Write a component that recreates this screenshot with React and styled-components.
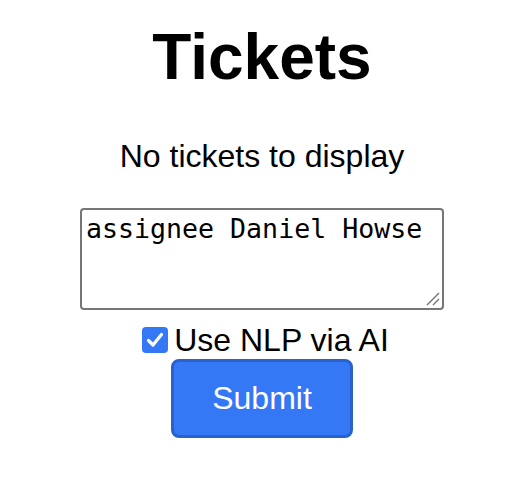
import React, { useState } from 'react';
import styled, { createGlobalStyle } from 'styled-components';

const GlobalStyle = createGlobalStyle`
  html, body {
    margin: 0;
    padding: 0;
    background: #ffffff;
  }
  body {
    font-family: "Liberation Sans", Arial, sans-serif;
    color: #000000;
  }
`;

const Page = styled.div`
  display: flex;
  flex-direction: column;
  align-items: center;
  padding: 20px 0 0 12px;
`;

const Title = styled.h1`
  margin: 0;
  font-size: 64px;
  font-weight: 700;
  line-height: 74px;
`;

const Message = styled.p`
  margin: 44px 0 0;
  font-size: 32px;
  line-height: 37px;
`;

const Form = styled.form`
  display: flex;
  flex-direction: column;
  align-items: center;
  margin-top: 33px;
`;

const BoxWrap = styled.div`
  position: relative;
  width: 364px;
  height: 102px;
`;

const QueryBox = styled.textarea`
  box-sizing: border-box;
  display: block;
  width: 100%;
  height: 100%;
  padding: 3px 4px;
  border: 2px solid #767676;
  border-radius: 4px;
  font-family: "DejaVu Sans Mono", "Liberation Mono", monospace;
  font-size: 26.6px;
  color: #000000;
  background: #ffffff;
  outline: none;
  resize: none;
`;

const Grip = styled.svg`
  position: absolute;
  right: 4px;
  bottom: 4px;
  pointer-events: none;
`;

const OptionRow = styled.label`
  display: flex;
  align-items: center;
  gap: 6px;
  margin-top: 15px;
  padding-left: 7px;
  font-size: 32px;
  line-height: 30px;
  cursor: pointer;
`;

const HiddenCheckbox = styled.input.attrs({ type: 'checkbox' })`
  position: absolute;
  opacity: 0;
  pointer-events: none;
`;

const Box = styled.span`
  display: flex;
  align-items: center;
  justify-content: center;
  width: 26px;
  height: 26px;
  border-radius: 4px;
  background: ${props => (props.checked ? '#3478f6' : '#ffffff')};
  border: ${props => (props.checked ? 'none' : '2px solid #767676')};
  box-sizing: border-box;

  svg {
    visibility: ${props => (props.checked ? 'visible' : 'hidden')};
  }
`;

const SubmitButton = styled.button`
  box-sizing: border-box;
  width: 182px;
  height: 79px;
  margin-top: 4px;
  border: 3px solid #2a62cc;
  border-radius: 8px;
  background: #3478f6;
  color: #ffffff;
  font-family: "Liberation Sans", Arial, sans-serif;
  font-size: 32px;
  cursor: pointer;
`;

export default function App() {
  const [query, setQuery] = useState('assignee Daniel Howse');
  const [useNlp, setUseNlp] = useState(true);

  return (
    <>
      <GlobalStyle />
      <Page>
        <Title>Tickets</Title>
        <Message>No tickets to display</Message>
        <Form onSubmit={e => e.preventDefault()}>
          <BoxWrap>
            <QueryBox value={query} onChange={e => setQuery(e.target.value)} spellCheck={false} />
            <Grip width="14" height="14" viewBox="0 0 14 14">
              <line x1="1" y1="13" x2="13" y2="1" stroke="#6e6e6e" strokeWidth="1.3" />
              <line x1="7" y1="13" x2="13" y2="7" stroke="#6e6e6e" strokeWidth="1.3" />
            </Grip>
          </BoxWrap>
          <OptionRow>
            <HiddenCheckbox checked={useNlp} onChange={e => setUseNlp(e.target.checked)} />
            <Box checked={useNlp}>
              <svg width="18" height="16" viewBox="0 0 18 16">
                <polyline
                  points="2.5 8.5 7 13 15.5 2.5"
                  fill="none"
                  stroke="#ffffff"
                  strokeWidth="3.2"
                  strokeLinecap="round"
                  strokeLinejoin="round"
                />
              </svg>
            </Box>
            Use NLP via AI
          </OptionRow>
          <SubmitButton type="submit">Submit</SubmitButton>
        </Form>
      </Page>
    </>
  );
}
